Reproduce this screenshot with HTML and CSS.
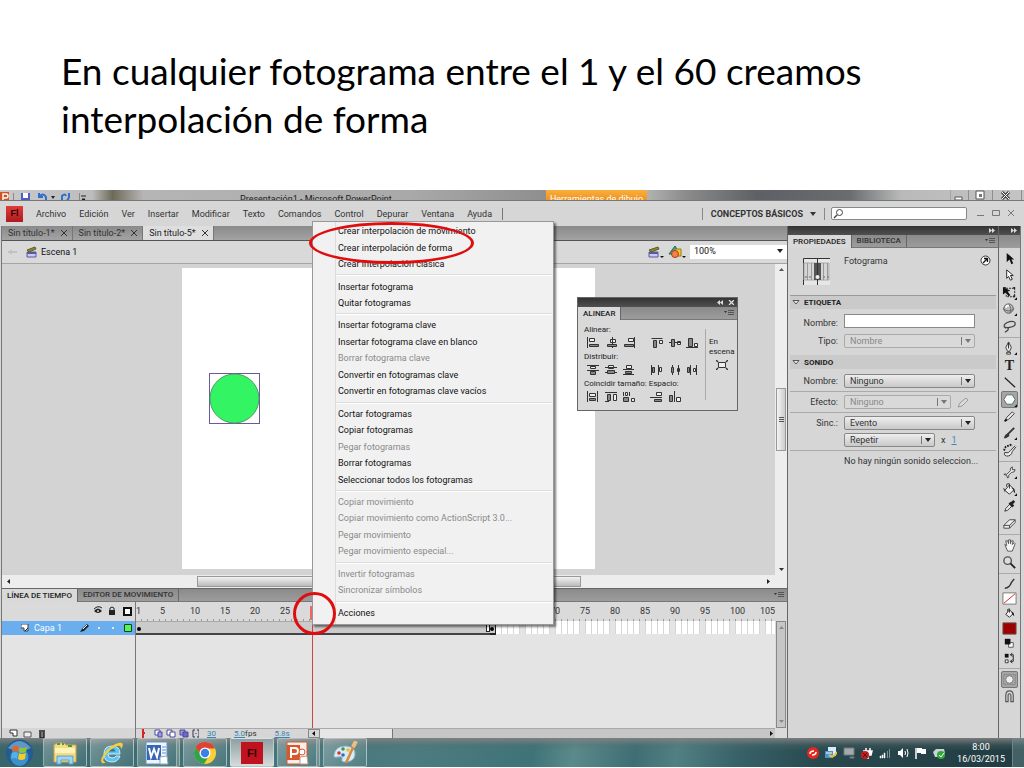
FILE: index.html
```html
<!DOCTYPE html>
<html lang="es">
<head>
    <meta charset="utf-8">
    <title>Interpolación de forma</title>
    <link rel="stylesheet" href="styles.css">
</head>
<body>
    <h1 class="slide-title">En cualquier fotograma entre el 1 y el 60 creamos<br>interpolación de forma</h1>

    <div class="desktop">
        <div class="ppt-bar">
            <div class="ppt-quick">
                <svg width="90" height="11" viewBox="0 0 90 11">
                    <path d="M0 2h9v9H0z" fill="#d35226"/><path d="M3 10V4h3a2 2 0 0 1 0 4H3" fill="none" stroke="#fff" stroke-width="1.4"/>
                    <path d="M13.500 3v8M79.500 3v8" stroke="#888"/>
                    <path d="M21 3h9v8h-9z" fill="#4a5fc4"/><path d="M23 3h5v5h-5z" fill="#fff"/>
                    <path d="M39 3v4h4M39 7q4-5 7 0v4" fill="none" stroke="#2f6fd0" stroke-width="2"/>
                    <path d="M51 6h4l-2 3z" fill="#222"/>
                    <path d="M62 11V6q3-3 4 0M69 3v4q-1 4-3 4" fill="none" stroke="#2f6fd0" stroke-width="2"/>
                    <path d="M81 6h5M82 9h3l-1.500 2z" stroke="#222"/>
                </svg>
            </div>
            <div class="ppt-title">Presentación1 - Microsoft PowerPoint</div>
            <div class="ppt-tab">Herramientas de dibujo</div>
            <svg class="ppt-controls" width="74" height="11" viewBox="0 0 74 11">
                <path d="M0 0v11M18.500 0v11M42.500 0v11M71.500 0v11" stroke="#8e8e8e"/>
                <path d="M5 7h7v3H5zM26 1h8v8h-8z" fill="#fff" stroke="#555"/><path d="M29 4h3v3h-3z" fill="#777"/>
                <path d="M52 2l7 7M59 2l-7 7" stroke="#444" stroke-width="3"/><path d="M52 2l7 7M59 2l-7 7" stroke="#fff"/>
            </svg>
        </div>

        <div class="menu-bar">
            <span class="fl-logo">Fl</span>
            <nav class="menus">
                <a href="#">Archivo</a><a href="#">Edición</a><a href="#">Ver</a><a href="#">Insertar</a><a href="#">Modificar</a><a href="#">Texto</a><a href="#">Comandos</a><a href="#">Control</a><a href="#">Depurar</a><a href="#">Ventana</a><a href="#">Ayuda</a>
            </nav>
            <div class="workspace">
                <button class="workspace-button">CONCEPTOS BÁSICOS <svg width="6" height="4"><path d="M0 0h6L3 4z" fill="#333"/></svg></button>
                <label class="search">
                    <svg width="12" height="11" viewBox="0 0 12 11"><circle cx="7.500" cy="4.500" r="3" fill="none" stroke="#444"/><path d="M5 7L2 10" stroke="#444" stroke-width="1.400"/></svg>
                    <input type="text" aria-label="Buscar">
                </label>
                <svg class="window-controls" width="38" height="9" viewBox="0 0 38 9">
                    <path d="M0 6.500h7M15.500 1.500h7v5h-7zM31 1l6 6M37 1l-6 6" fill="none" stroke="#777"/>
                </svg>
            </div>
        </div>

        <div class="workarea">
            <main class="document">
                <div class="doc-tabs">
                    <button class="doc-tab">Sin título-1* <svg width="6" height="6"><path d="M0 0l6 6M6 0L0 6" stroke="#333"/></svg></button>
                    <button class="doc-tab">Sin título-2* <svg width="6" height="6"><path d="M0 0l6 6M6 0L0 6" stroke="#333"/></svg></button>
                    <button class="doc-tab active">Sin título-5* <svg width="6" height="6"><path d="M0 0l6 6M6 0L0 6" stroke="#333"/></svg></button>
                </div>
                <div class="scene-bar">
                    <svg width="10" height="8" viewBox="0 0 10 8"><path d="M0 4h9M3 2v4M1 3v2" stroke="#c2c2c2" stroke-width="2"/></svg>
                    <svg class="clapper" width="11" height="12" viewBox="0 0 11 12"><path d="M1 6h9v5H1z" fill="#c7c9ff" stroke="#5a5a9a"/><path d="M1 7h9" stroke="#5a5a9a" stroke-width="2"/><path d="M1 4l8-3 1 2-7 3z" fill="#8a8a32" stroke="#5e5e24"/></svg>
                    <span>Escena 1</span>
                    <div class="scene-tools">
                        <svg width="16" height="14" viewBox="0 0 16 14"><path d="M1 7h9v5H1z" fill="#c7c9ff" stroke="#5a5a9a"/><path d="M1 8h9" stroke="#5a5a9a" stroke-width="2"/><path d="M1 5l9-3 1 2-8 3z" fill="#8a8a32" stroke="#5e5e24"/><path d="M12 11h4l-2 2z" fill="#111"/></svg>
                        <svg width="18" height="14" viewBox="0 0 18 14"><path d="M7 1l5 8H1z" fill="#39a58a" stroke="#1e6a5a"/><path d="M7 4h6v7H7z" fill="#f5c93a" stroke="#9a7a10"/><circle cx="7" cy="9" r="3.500" fill="#f4804a" stroke="#b23c12"/><path d="M14 11h4l-2 2z" fill="#111"/></svg>
                        <span class="zoom"><select aria-label="Zoom"><option>100%</option></select></span>
                    </div>
                </div>
                <div class="stage-row">
                    <div class="stage">
                        <div class="canvas">
                            <svg class="shape" width="51" height="51" viewBox="0 0 51 51"><rect x=".5" y=".5" width="50" height="50" fill="#fff" stroke="#6a5a9c"/><circle cx="25.500" cy="25.500" r="24.500" fill="#33f564" stroke="#4d9c62"/></svg>
                        </div>
                    </div>
                    <div class="scroll-v">
                        <svg width="5" height="3"><path d="M0 3h5L2.500 0z" fill="#555"/></svg>
                        <div class="thumb-v"><i></i><i></i><i></i></div>
                        <svg width="5" height="3"><path d="M0 0h5L2.500 3z" fill="#333"/></svg>
                    </div>
                </div>
                <div class="scroll-h">
                    <svg width="3" height="5"><path d="M3 0v5L0 2.500z" fill="#222"/></svg>
                    <div class="thumb-h"></div>
                    <svg width="3" height="5"><path d="M0 0v5l3-2.500z" fill="#222"/></svg>
                </div>

                <section class="timeline">
                    <div class="panel-tabs">
                        <button class="panel-tab active">LÍNEA DE TIEMPO</button>
                        <button class="panel-tab">EDITOR DE MOVIMIENTO</button>
                        <svg class="panel-menu" width="10" height="6" viewBox="0 0 10 6"><path d="M0 1h3L1.500 3z" fill="#333"/><path d="M4 .5h6M4 2.500h6M4 4.500h6" stroke="#555"/></svg>
                    </div>
                    <div class="timeline-body">
                        <div class="layers">
                            <div class="layers-head">
                                <svg width="38" height="10" viewBox="0 0 38 10"><path d="M0 5q4-5 8 0-4 4-8 0z" fill="#222"/><circle cx="4" cy="5" r="1" fill="#ccc"/><path d="M0 3q4-4 8-1" fill="none" stroke="#222"/><path d="M15 4h6v5h-6z" fill="#222"/><path d="M16 5V2q2-2 4 0v3" fill="none" stroke="#222"/><path d="M30 2h7v7h-7z" fill="#fff" stroke="#111" stroke-width="2"/></svg>
                            </div>
                            <div class="layer">
                                <svg width="8" height="8" viewBox="0 0 8 8"><path d="M0 0h7v7H3V4H0z" fill="#fff" stroke="#444"/><path d="M4 7l3-3" stroke="#222"/></svg>
                                <span>Capa 1</span>
                                <svg width="54" height="10" viewBox="0 0 54 10"><path d="M1 9l2-3 5-5 2 2-5 5z" fill="#222"/><path d="M4 6l4-4" stroke="#eee"/><circle cx="20" cy="5" r="1" fill="#fff"/><circle cx="34" cy="5" r="1" fill="#fff"/><path d="M45.500 1.500h7v7h-7z" fill="#4df95a" stroke="#14401a"/></svg>
                            </div>
                            <div class="layers-foot">
                                <svg width="38" height="9" viewBox="0 0 38 9"><path d="M1 1h7v6H4V4H1z" fill="#fff" stroke="#333"/><path d="M15 3h7v5h-7z" fill="#eee" stroke="#555"/><path d="M30 2h6M31 3v6h4V3" fill="#777" stroke="#222" stroke-width="1.400"/></svg>
                            </div>
                        </div>
                        <div class="frames">
                            <div class="ruler">
                                <span class="first">1</span><span>5</span><span>10</span><span>15</span><span>20</span><span>25</span><span></span><span></span><span></span><span></span><span></span><span></span><span></span><span></span><span>70</span><span>75</span><span>80</span><span>85</span><span>90</span><span>95</span><span>100</span><span class="last">105</span>
                            </div>
                            <div class="frame-row">
                                <div class="tween"><i class="key"></i><i class="end"></i></div>
                                <div class="key-cell"><i class="key"></i></div>
                                <div class="empty"></div>
                            </div>
                            <div class="frames-foot">
                                <svg width="60" height="9" viewBox="0 0 60 9"><path d="M4 0v9M3 4h3" stroke="#d22" stroke-width="2"/><g fill="#fff" stroke="#4b48a0"><path d="M16 1h5v5h-5z"/><path d="M19 3h4v5h-4z" fill="#9c9be0"/><path d="M28 1h5v5h-5z"/><path d="M31 3h5v5h-5z"/><path d="M41 1h5v5h-5z" fill="#9c9be0"/><path d="M44 3h5v5h-5z" fill="#6f6cc0"/></g><path d="M56 1h-2v7h2M58 1h2v7h-2M57 4v1" fill="none" stroke="#335"/></svg>
                                <span class="value">30</span><span><b class="value">5.0</b>fps</span><span class="value">5.8s</span>
                                <div class="foot-scroll">
                                    <span class="foot-arrow"><svg width="3" height="5"><path d="M3 0v5L0 2.500z" fill="#111"/></svg></span>
                                    <span class="foot-thumb"></span>
                                    <span class="foot-track"><svg width="3" height="5"><path d="M0 0v5l3-2.500z" fill="#111"/></svg></span>
                                </div>
                            </div>
                            <div class="playhead"></div>
                        </div>
                        <div class="timeline-scroll">
                            <div class="timeline-track">
                                <svg width="5" height="3"><path d="M0 3h5L2.500 0z" fill="#888"/></svg>
                                <svg width="5" height="3"><path d="M0 0h5L2.500 3z" fill="#888"/></svg>
                            </div>
                        </div>
                    </div>
                </section>
            </main>

            <aside class="properties">
                <div class="dock-strip"><svg width="6" height="5"><path d="M0 0l3 2.500L0 5zM3 0l3 2.500L3 5z" fill="#ddd"/></svg></div>
                <div class="panel-tabs">
                    <button class="panel-tab active">PROPIEDADES</button>
                    <button class="panel-tab">BIBLIOTECA</button>
                    <svg class="panel-menu" width="10" height="6" viewBox="0 0 10 6"><path d="M0 1h3L1.500 3z" fill="#333"/><path d="M4 .5h6M4 2.500h6M4 4.500h6" stroke="#555"/></svg>
                </div>
                <div class="prop-head">
                    <svg width="27" height="27" viewBox="0 0 27 27"><path d="M0 0h27v27H0z" fill="#e6e6e6"/><path d="M.5 27V.5H27" fill="none" stroke="#333"/><path d="M1 5h25v17H1z" fill="#d5d5d5" stroke="#aaa"/><path d="M4.500 5v17M8.500 5v17M20.500 5v17M24.500 5v17" stroke="#999"/><path d="M11 5h7v17h-7z" fill="#555"/><path d="M14.500 1v26" stroke="#333"/><circle cx="14.500" cy="19" r="2" fill="#eee"/><g fill="#888"><circle cx="3" cy="19" r="1"/><circle cx="7" cy="19" r="1"/><circle cx="21" cy="19" r="1"/><circle cx="25" cy="19" r="1"/></g></svg>
                    <span>Fotograma</span>
                    <svg class="help" width="11" height="11" viewBox="0 0 11 11"><circle cx="5.500" cy="5.500" r="4.500" fill="#fff" stroke="#333"/><path d="M3 8l4-4M4 3.500h3.500V7" fill="none" stroke="#111" stroke-width="1.300"/></svg>
                </div>
                <h2 class="group-title"><svg width="8" height="5"><path d="M1 .5h6L4 4z" fill="#eee" stroke="#555"/></svg>ETIQUETA</h2>
                <div class="field">
                    <label for="etiqueta">Nombre:</label>
                    <input class="wide" type="text" id="etiqueta">
                </div>
                <div class="field">
                    <label for="tipo">Tipo:</label>
                    <span class="select wide disabled"><select id="tipo" disabled><option>Nombre</option></select></span>
                </div>
                <h2 class="group-title second"><svg width="8" height="5"><path d="M1 .5h6L4 4z" fill="#eee" stroke="#555"/></svg>SONIDO</h2>
                <div class="field">
                    <label for="sonido">Nombre:</label>
                    <span class="select wide"><select id="sonido"><option>Ninguno</option></select></span>
                </div>
                <div class="field ruled">
                    <label for="efecto">Efecto:</label>
                    <span class="select medium disabled"><select id="efecto" disabled><option>Ninguno</option></select></span>
                    <svg width="12" height="11" viewBox="0 0 12 11"><path d="M1 10l2-4 6-5 2 2-6 6z" fill="#ddd" stroke="#999"/></svg>
                </div>
                <div class="field ruled">
                    <label for="sinc">Sinc.:</label>
                    <span class="select wide"><select id="sinc"><option>Evento</option></select></span>
                </div>
                <div class="field">
                    <span></span>
                    <span class="select short"><select aria-label="Repetición"><option>Repetir</option></select></span>
                    <span>x</span><a class="value" href="#">1</a>
                </div>
                <p class="sound-note">No hay ningún sonido seleccion...</p>
            </aside>

            <aside class="tools">
                <div class="dock-strip"><svg width="6" height="5"><path d="M0 0l3 2.500L0 5zM3 0l3 2.500L3 5z" fill="#ddd"/></svg></div>
                <div class="tools-head"></div>
                <div class="tool-group">
                    <button aria-label="Selección"><svg viewBox="0 0 16 16"><path d="M5 2v10l3-3 2 5 2-1-2-4h3z" fill="#111"/></svg></button>
                    <button aria-label="Subselección"><svg viewBox="0 0 16 16"><path d="M5 2v9l2-2 2 4 2-1-2-4h3z" fill="#fff" stroke="#222"/></svg></button>
                    <button aria-label="Transformación"><svg viewBox="0 0 16 16"><path d="M4.500 3.500h9v9h-9z" fill="none" stroke="#222" stroke-dasharray="2 1"/><path d="M1 2v8l3-2 3 4 2-1-3-4 3-1z" fill="#111"/><path d="M2 2h2v2H2zM12 2h2v2h-2zM12 11h2v2h-2z" fill="#222"/><path d="M13 16h3v-3z" fill="#111"/></svg></button>
                    <button aria-label="Rotación 3D"><svg viewBox="0 0 16 16"><circle cx="7" cy="7" r="5" fill="#bbb" stroke="#555"/><path d="M4 6q1-3 4-2" stroke="#fff" stroke-width="2" fill="none"/><path d="M1 7q6 5 12 0M7 2q4 5 1 10" fill="none" stroke="#666"/><path d="M13 15h3v-3z" fill="#111"/></svg></button>
                    <button aria-label="Lazo"><svg viewBox="0 0 16 16"><path d="M4 10q-4-3 1-6 7-3 9 0 1 4-6 5-5 1-5-1M5 9q3 1 1 3t-3 2" fill="none" stroke="#444" stroke-width="1.300"/></svg></button>
                </div>
                <div class="tool-group">
                    <button aria-label="Pluma"><svg viewBox="0 0 16 16"><path d="M7 1l3 6-2 4H6L4 7zM5 12h4v2H5z" fill="#eee" stroke="#333"/><path d="M7 2v6" stroke="#222"/><path d="M13 15h3v-3z" fill="#111"/></svg></button>
                    <button class="type-tool" aria-label="Texto">T</button>
                    <button aria-label="Línea"><svg viewBox="0 0 16 16"><path d="M3 3l11 10" stroke="#222" stroke-width="1.300"/></svg></button>
                    <button class="selected" aria-label="Polígono"><svg viewBox="0 0 16 16"><path d="M5 3h6l3 5-3 5H5L2 8z" fill="#f4ffff" stroke="#666"/><path d="M13 16h3v-3z" fill="#111"/></svg></button>
                    <button aria-label="Lápiz"><svg viewBox="0 0 16 16"><path d="M3 13l2-4 6-6 2 2-6 6z" fill="#eee" stroke="#333"/><path d="M3 13l2-2" stroke="#111" stroke-width="2"/></svg></button>
                    <button aria-label="Pincel"><svg viewBox="0 0 16 16"><path d="M13 2L6 9" stroke="#333" stroke-width="2"/><path d="M2 13q1-5 5-5l1 2q-2 3-6 3z" fill="#333"/><path d="M13 15h3v-3z" fill="#111"/></svg></button>
                    <button aria-label="Deco"><svg viewBox="0 0 16 16"><path d="M14 3L9 8q-2 4-6 2-2 3 2 4 5 0 6-5l4-5" fill="#eee" stroke="#333"/><path d="M2 8l2-4 5-2 2 1" fill="none" stroke="#222" stroke-width="2" stroke-dasharray="2 1"/></svg></button>
                </div>
                <div class="tool-group">
                    <button aria-label="Hueso"><svg viewBox="0 0 16 16"><path d="M2 10q2-1 3 0l4-4q-1-3 2-4v3h3q0 3-4 3l-3 3q1 2-1 3l-1-3z" fill="#eee" stroke="#444"/><path d="M13 15h3v-3z" fill="#111"/></svg></button>
                    <button aria-label="Cubo de pintura"><svg viewBox="0 0 16 16"><path d="M3 9l5-6 5 5-5 5z" fill="#eee" stroke="#333"/><path d="M8 7V2q-4-1-3 3" fill="none" stroke="#333"/><path d="M10 6q4 0 4 6-2-1-2-4z" fill="#222"/><path d="M1 6l3 2-1 3z" fill="#444"/><path d="M13 15h3v-3z" fill="#111"/></svg></button>
                    <button aria-label="Cuentagotas"><svg viewBox="0 0 16 16"><path d="M3 13l1-3 5-5 2 2-5 5z" fill="#eee" stroke="#333"/><path d="M8 4l4 4M10 5l3-3" stroke="#222" stroke-width="3"/></svg></button>
                    <button aria-label="Borrador"><svg viewBox="0 0 16 16"><path d="M2 10l6-6h6l-6 6zM2 10v3h6v-3M8 13l6-6V4" fill="#eee" stroke="#444"/></svg></button>
                </div>
                <div class="tool-group">
                    <button aria-label="Mano"><svg viewBox="0 0 16 16"><path d="M3 7l2 1-1-5 2 0 1 3V2h2v4l1-3 2 0-1 4 2-2 1 1-3 8H6z" fill="#f4f4f4" stroke="#555"/></svg></button>
                    <button aria-label="Zoom"><svg viewBox="0 0 16 16"><circle cx="6" cy="6" r="4" fill="#ddd" stroke="#555" stroke-width="1.500"/><path d="M9 9l5 5" stroke="#222" stroke-width="2"/></svg></button>
                </div>
                <div class="tool-group small">
                    <button aria-label="Color de trazo"><svg viewBox="0 0 16 16"><path d="M3 13q5 0 7-6l3-4" fill="none" stroke="#333" stroke-width="1.500"/></svg></button>
                    <button aria-label="Sin trazo"><svg viewBox="0 0 16 14"><path d="M1 1h14v12H1z" fill="#fff" stroke="#777"/><path d="M2 12L14 2" stroke="#d22"/></svg></button>
                    <button aria-label="Color de relleno"><svg viewBox="0 0 16 16"><path d="M4 9l4-5 4 4-4 4z" fill="#eee" stroke="#333"/><path d="M8 7V3q-3 0-2 3" fill="none" stroke="#333"/><path d="M10 6q3 0 3 5l-2-2z" fill="#222"/></svg></button>
                    <button aria-label="Relleno rojo"><svg viewBox="0 0 16 14"><path d="M1 1h14v12H1z" fill="#9c0000" stroke="#6a5050"/></svg></button>
                    <button aria-label="Blanco y negro"><svg viewBox="0 0 16 16"><path d="M7 7h5v5H7z" fill="#fff" stroke="#555"/><path d="M3 3h6v6H3z" fill="#111"/></svg></button>
                    <button aria-label="Intercambiar colores"><svg viewBox="0 0 16 16"><path d="M3 3h4v4H3z" fill="#111"/><path d="M3.500 9.500h3v3h-3z" fill="#fff" stroke="#333"/><path d="M9 4h3v7H9M11 2L9 4l2 2M11 9l-2 2 2 2" fill="none" stroke="#222"/></svg></button>
                </div>
                <div class="tool-group">
                    <button class="selected" aria-label="Dibujo de objeto"><svg viewBox="0 0 16 16"><path d="M2 3h12v10H2z" fill="#aaa" stroke="#666" stroke-dasharray="1 1"/><circle cx="8" cy="8" r="4" fill="#eee" stroke="#777"/></svg></button>
                    <button aria-label="Ajustar a objetos"><svg viewBox="0 0 16 16"><path d="M4 14V7q0-5 4-5t4 5v7M6.500 14V7q0-2 1.500-2t1.500 2v7M4 13.500h2.500M9.500 13.500H12" fill="none" stroke="#555" stroke-width="1.200"/></svg></button>
                </div>
            </aside>
        </div>

        <footer class="taskbar">
            <button class="start" aria-label="Inicio"><svg width="29" height="28" viewBox="0 0 29 28"><circle cx="14.500" cy="14" r="13.500" fill="#225c93"/><circle cx="14.500" cy="18" r="9" fill="#3b91c8"/><path d="M3 9q11-14 23 0-12 6-23 0z" fill="#7fb0d6" opacity=".7"/><path d="M8 8q3-2 6 0l-1 5q-3-2-6 0z" fill="#e8622c"/><path d="M15 8q3 2 7 0l-1 5q-4 2-7 0z" fill="#8cc63c"/><path d="M7 14q3-2 6 0l-1 6q-3-2-6 0z" fill="#4fb2e8"/><path d="M14 14q3 2 7 0l-1 6q-4 2-7 0z" fill="#fcc92c"/></svg></button>
            <button class="task" aria-label="Explorador"><svg width="24" height="24" viewBox="0 0 24 24"><path d="M1 4l3-2h7l2 2h10v17H1z" fill="#f3dc82" stroke="#c9a94a"/><path d="M2 7h20v5H2z" fill="#fff3b8"/><path d="M4 3h3M9 3h2M15 5h4" stroke="#4a9a4a" stroke-width="2"/><path d="M4 23v-8h16v8h-4v-4H8v4z" fill="#9fd5f1" stroke="#5aa0cc"/></svg></button>
            <button class="task" aria-label="Internet Explorer"><svg width="26" height="24" viewBox="0 0 26 24"><path d="M21 13H9q0 4 4 4 3 0 4-2h4q-2 6-8 6-8 0-8-8t8-8q8 0 8 8z" fill="#5ac4f4" stroke="#c8ecff"/><path d="M9.500 10.500h7q-1-3-3.500-3-3 0-3.500 3z" fill="#41708c"/><path d="M3 22q-3-4 5-13Q18 0 23 2q2 2-1 6 0-4-4-3Q11 8 6 15q-4 6 1 6-3 2-4 1z" fill="#f6cf3c"/></svg></button>
            <button class="task stacked" aria-label="Word"><svg width="24" height="24" viewBox="0 0 24 24"><path d="M1 1h21v22H1z" fill="#eef4fb" stroke="#6b8fc2"/><path d="M2 4h14v15H2z" fill="#3565b5"/><path d="M4 7l2 9 3-8 3 8 2-9" fill="none" stroke="#fff" stroke-width="2"/><path d="M17 6h4M17 9h4M17 12h4" stroke="#6a91cc"/><path d="M15 16l7-1 1 8h-8z" fill="#fff" stroke="#8ab"/></svg></button>
            <button class="task" aria-label="Chrome"><svg width="24" height="24" viewBox="0 0 24 24"><circle cx="12" cy="12" r="11" fill="#f9cf3a"/><path d="M2.500 6.500A11 11 0 0 1 22 7.500H12L8 14z" fill="#dd4335"/><path d="M2.500 6.500A11 11 0 0 0 11 23l5-8-8-1z" fill="#2fa351"/><circle cx="12" cy="12" r="5.500" fill="#fff"/><circle cx="12" cy="12" r="4.200" fill="#3f7fe8"/></svg></button>
            <button class="task current"><span class="task-fl">Fl</span></button>
            <button class="task stacked" aria-label="PowerPoint"><svg width="24" height="24" viewBox="0 0 24 24"><path d="M2 1h20v22H2z" fill="#fbeee8" stroke="#d9582b"/><path d="M2 4h13v15H2z" fill="#d9582b"/><path d="M6 17V7h4a3 3 0 0 1 0 6H6" fill="none" stroke="#fff" stroke-width="2"/><circle cx="17" cy="11" r="3" fill="#fff" stroke="#d9582b"/><path d="M15 16l7-1 1 8h-8z" fill="#fff" stroke="#b98"/></svg></button>
            <button class="task" aria-label="Paint"><svg width="26" height="24" viewBox="0 0 26 24"><path d="M2 14Q3 5 14 5q10 1 9 9-1 7-10 7-4 0-3-3t-4-2-4-2z" fill="#d8ebf6" stroke="#8ab4cc"/><circle cx="7" cy="12" r="1.800" fill="#d33"/><circle cx="11" cy="8" r="1.800" fill="#3a9a4a"/><circle cx="16" cy="9" r="1.800" fill="#f3b92c"/><circle cx="11" cy="14" r="1.800" fill="#2f6fc0"/><path d="M23 2L14 22" stroke="#d9893a" stroke-width="2.500"/><path d="M24 0l-3 6" stroke="#e9c083" stroke-width="4"/></svg></button>
            <div class="tray">
                <svg width="12" height="12" viewBox="0 0 12 12"><circle cx="6" cy="6" r="6" fill="#e3281f"/><path d="M3 7q0-3 4-3M9 5q0 3-4 3" fill="none" stroke="#fff" stroke-width="1.500"/></svg>
                <svg width="12" height="12" viewBox="0 0 12 12"><path d="M3 0h8v9H3z" fill="#dceaf5"/><path d="M0 4h8v7H0z" fill="#4a94d0"/><path d="M1 6h6" stroke="#fff"/><path d="M4 8q4 4 8-3" fill="none" stroke="#eac23a" stroke-width="2"/></svg>
                <svg width="12" height="12" viewBox="0 0 12 12"><path d="M1 1h10v7H1zM7 10h4v1H7z" fill="#a4a9ac" stroke="#72787c"/></svg>
                <svg width="12" height="12" viewBox="0 0 12 12"><path d="M5 1v3M9 1v3M3 4h8l-1 4H5zM7 8v4" fill="#fff" stroke="#fff" stroke-width="1.500"/><circle cx="4" cy="8" r="4" fill="#c81c1c"/><path d="M2 6l4 4M6 6l-4 4" stroke="#511"/></svg>
                <svg width="12" height="12" viewBox="0 0 12 12"><path d="M1 9h1v2H1zM3 8h1v3H3zM5 6h1v5H5z" fill="#fff" stroke="#fff" stroke-width=".5"/><path d="M8 4h1v7H8zM10 2h1v9h-1z" fill="#7d9298"/></svg>
                <svg width="12" height="12" viewBox="0 0 12 12"><path d="M1 4h2l3-3v10L3 8H1z" fill="#fff"/><path d="M8 4q1 2 0 4M10 2q2 4 0 8" fill="none" stroke="#fff"/></svg>
                <svg width="12" height="12" viewBox="0 0 12 12"><path d="M1 1v11" stroke="#fff" stroke-width="1.500"/><path d="M2 1h5v1h4v5H6V6H2z" fill="#fff"/></svg>
                <svg width="12" height="12" viewBox="0 0 12 12"><path d="M0 5l3-3h8l1 4-2 4H2z" fill="#c9d2d4"/><circle cx="8" cy="8" r="4" fill="#2faa3a"/><path d="M6 8l2 2 3-4" fill="none" stroke="#fff"/></svg>
                <div class="clock"><time>8:00</time><time>16/03/2015</time></div>
            </div>
            <button class="show-desktop" aria-label="Mostrar escritorio"></button>
        </footer>

        <!-- floating alignment panel -->
        <section class="align-panel">
            <div class="dock-strip"><svg width="17" height="5" viewBox="0 0 17 5"><path d="M3 0v5L0 2.500zM6 0v5L3 2.500z" fill="#ddd"/><path d="M12 0l5 5M17 0l-5 5" stroke="#ddd" stroke-width="1.300"/></svg></div>
            <div class="panel-tabs">
                <button class="panel-tab active">ALINEAR</button>
                <svg class="panel-menu" width="10" height="6" viewBox="0 0 10 6"><path d="M0 1h3L1.500 3z" fill="#333"/><path d="M4 .5h6M4 2.500h6M4 4.500h6" stroke="#555"/></svg>
            </div>
            <div class="align-body">
                <div class="align-left">
                    <span>Alinear:</span>
                    <svg width="112" height="12" viewBox="0 0 112 12" fill="#eee" stroke="#333">
                        <path d="M.5 0v11M2.500 1.500h5v3h-5z"/><path d="M2.500 7.500h9v2h-9z" fill="#888"/>
                        <path d="M25.500 0v11M23.500 2.500h5v3h-5z"/><path d="M20.500 7.500h9v2h-9z" fill="#888"/>
                        <path d="M47.500 0v11M41.500 1.500h5v3h-5z"/><path d="M37.500 7.500h9v2h-9z" fill="#888"/>
                        <path d="M64.500 1.500h11M72.500 3.500h3v3h-3z"/><path d="M66.500 3.500h3v7h-3z" fill="#888"/>
                        <path d="M82 5.500h12M90.500 4.500h3v3h-3z"/><path d="M84.500 2.500h3v7h-3z" fill="#888"/>
                        <path d="M99 10.500h12M107.500 6.500h3v3h-3z"/><path d="M101.500 1.500h4v8h-4z" fill="#888"/>
                    </svg>
                    <span>Distribuir:</span>
                    <svg width="112" height="12" viewBox="0 0 112 12" fill="#eee" stroke="#333">
                        <path d="M0 1.500h12M3.500 2.500h5v2h-5zM0 6.500h12"/><path d="M3.500 7.500h5v3h-5z" fill="#888"/>
                        <path d="M18 3.500h12M21.500 1.500h5v3h-5zM18 8.500h12"/><path d="M20.500 6.500h7v3h-7z" fill="#888"/>
                        <path d="M36 5.500h11M39.500 1.500h5v3h-5zM36 10.500h11"/><path d="M38.500 7.500h6v2h-6z" fill="#888"/>
                        <path d="M64.500 1v10M71.500 1v10M72.500 3.500h2v4h-2z"/><path d="M65.500 3.500h2v5h-2z" fill="#888"/>
                        <path d="M85.500 1v10M91.500 1v10M90.500 4.500h2v3h-2z"/><path d="M84.500 3.500h2v5h-2z" fill="#888"/>
                        <path d="M103.500 1v10M109.500 1v10M106.500 4.500h2v3h-2z"/><path d="M100.500 3.500h2v5h-2z" fill="#888"/>
                    </svg>
                    <span>Coincidir tamaño: Espacio:</span>
                    <svg width="112" height="12" viewBox="0 0 112 12" fill="#eee" stroke="#333">
                        <path d="M.5 0v11M10.500 0v11M2.500 2.500h6v3h-6z"/><path d="M2.500 7.500h6v2h-6z" fill="#888"/>
                        <path d="M18 1.500h12M18 10.500h4M26.500 3.500h3v6h-3z"/><path d="M20.500 3.500h3v6h-3z" fill="#888"/>
                        <path d="M36.500 1v4M42.500 1v4M38.500 1.500h2v3h-2zM44.500 7.500h3v3h-3z"/><path d="M36.500 6.500h5v4h-5z" fill="#888"/>
                        <path d="M63 6.500h12M69.500 1.500h5v3h-5z"/><path d="M67.500 8.500h7v2h-7z" fill="#888"/>
                        <path d="M87.500 0v11M89.500 6.500h4v4h-4z"/><path d="M82.500 4.500h3v6h-3z" fill="#888"/>
                    </svg>
                </div>
                <div class="align-right">
                    <span>En<br>escena</span>
                    <svg width="12" height="10" viewBox="0 0 12 10"><path d="M2.500 2.500h7v5h-7z" fill="#eee" stroke="#333"/><path d="M0 0l2 2M12 0l-2 2M0 10l2-2M12 10l-2-2" stroke="#333" stroke-width="1.400"/></svg>
                </div>
            </div>
        </section>

        <!-- frame context menu -->
        <div class="context-menu">
            <button>Crear interpolación de movimiento</button>
            <button>Crear interpolación de forma</button>
            <button>Crear interpolación clásica</button>
            <hr>
            <button>Insertar fotograma</button>
            <button>Quitar fotogramas</button>
            <hr>
            <button>Insertar fotograma clave</button>
            <button>Insertar fotograma clave en blanco</button>
            <button disabled>Borrar fotograma clave</button>
            <button>Convertir en fotogramas clave</button>
            <button>Convertir en fotogramas clave vacíos</button>
            <hr>
            <button>Cortar fotogramas</button>
            <button>Copiar fotogramas</button>
            <button disabled>Pegar fotogramas</button>
            <button>Borrar fotogramas</button>
            <button>Seleccionar todos los fotogramas</button>
            <hr>
            <button disabled>Copiar movimiento</button>
            <button disabled>Copiar movimiento como ActionScript 3.0...</button>
            <button disabled>Pegar movimiento</button>
            <button disabled>Pegar movimiento especial...</button>
            <hr>
            <button disabled>Invertir fotogramas</button>
            <button disabled>Sincronizar símbolos</button>
            <hr>
            <button>Acciones</button>
        </div>

        <div class="mark mark-shape"></div>
        <div class="mark mark-frame"></div>
    </div>
</body>
</html>
```

FILE: styles.css
```css
*{
    box-sizing: border-box;
}
body{
    margin: 0;
    background: #fff;
    color: #333;
    font-family: Roboto, "Open Sans", sans-serif;
    font-size: 9px;
    line-height: 12px;
}
button, input, select{
    margin: 0;
    padding: 0;
    border: 0;
    background: none;
    color: inherit;
    font: inherit;
}
select{
    appearance: none;
    opacity: 1;
}
svg{
    display: block;
    flex: none;
}
a{
    color: inherit;
    text-decoration: none;
}
.slide-title{
    margin: 0;
    padding: 47px 61px;
    color: #000;
    font: 37px/48px Lato, sans-serif;
}
.desktop{
    position: relative;
    background: #d6d6d6;
    border-bottom: 2px solid #fff;
}
.value{
    color: #3a85b5;
    font-weight: normal;
    text-decoration: underline;
}

/* powerpoint title strip */
.ppt-bar{
    display: flex;
    height: 11px;
    overflow: hidden;
    background: linear-gradient(90deg, #c9c9c9 0, #bdbdbd 9%, #6e6a58 11%, #b5b5b5 14%, #a9a9a9 40%, #8f8f8f 53%, #b4b4b4 63%, #8b8b8b 67%, #5d6064 74%, #6a6d70 83%, #b9b9b9 88%, #c4c4c4 100%);
    border-bottom: 1px solid #777;
    line-height: 18px;
}
.ppt-quick{
    width: 240px;
}
.ppt-title{
    width: 306px;
    color: #222;
}
.ppt-tab{
    width: 101px;
    background: linear-gradient(#f9ae3e, #ef9420);
    color: #fff;
    text-align: center;
}
.ppt-controls{
    margin-left: auto;
}

/* menu bar */
.menu-bar{
    display: flex;
    align-items: center;
    height: 25px;
    padding: 0 9px 0 6px;
}
.fl-logo{
    width: 17px;
    height: 16px;
    background: linear-gradient(#e23b3b, #ac1a20);
    color: #300;
    font: bold 9px/15px "Liberation Sans", sans-serif;
    text-align: center;
}
.menus{
    display: flex;
    gap: 13px;
    padding: 0 10px 0 13px;
    border-right: 1px solid #777;
}
.workspace{
    display: flex;
    align-items: center;
    margin-left: auto;
}
.workspace-button{
    display: flex;
    align-items: center;
    gap: 7px;
    padding: 0 8px;
    border: solid #888;
    border-width: 0 1px;
    font-weight: bold;
}
.search{
    display: flex;
    align-items: center;
    width: 136px;
    height: 13px;
    margin: 0 10px 0 6px;
    background: #fff;
    border: 1px solid #888;
    border-radius: 2px;
}
.search input{
    width: 100%;
}

.workarea{
    display: flex;
    padding: 0 3px 0 1px;
}
.document{
    flex: 1;
    min-width: 0;
    border-left: 1px solid #777;
}

/* document tabs */
.doc-tabs{
    display: flex;
    height: 15px;
    background: linear-gradient(#8a8a8a, #a3a3a3);
    border-bottom: 1px solid #555;
}
.doc-tab{
    display: flex;
    align-items: center;
    gap: 6px;
    padding: 0 5px 0 6px;
    border-right: 1px solid #777;
    color: #333;
}
.doc-tab.active{
    background: #dedede;
    color: #222;
}
.scene-bar{
    display: flex;
    align-items: center;
    height: 23px;
    padding-left: 6px;
    background: #d9d9d9;
    border-bottom: 1px solid #a5a5a5;
    color: #111;
}
.clapper{
    margin: 0 4px 0 8px;
}
.scene-tools{
    display: flex;
    align-items: center;
    gap: 4px;
    margin-left: auto;
}
.zoom{
    position: relative;
    width: 97px;
    height: 14px;
    background: #fff;
}
.zoom select{
    width: 100%;
    padding-left: 4px;
}
.zoom::after, .select::after{
    content: "";
    position: absolute;
    top: 4px;
    right: 4px;
    border: solid transparent;
    border-width: 4px 3px 0;
    border-top-color: #222;
    pointer-events: none;
}

/* stage */
.stage-row{
    display: flex;
}
.stage{
    flex: 1;
    padding: 4px 0 6px;
    background: #d3d3d3;
}
.canvas{
    position: relative;
    width: 413px;
    height: 301px;
    margin: auto;
    background: #fff;
}
.shape{
    position: absolute;
    left: 27px;
    top: 105px;
}
.scroll-v{
    display: flex;
    flex-direction: column;
    align-items: center;
    width: 12px;
    padding: 4px 0;
    background: #ededed;
}
.thumb-v{
    display: flex;
    flex-direction: column;
    align-items: center;
    justify-content: center;
    gap: 1px;
    width: 10px;
    height: 63px;
    margin: 117px 0 auto;
    background: linear-gradient(90deg, #f4f4f4, #ccc);
    border: 1px solid #999;
}
.thumb-v i{
    width: 5px;
    height: 1px;
    background: #555;
}
.scroll-h{
    display: flex;
    align-items: center;
    height: 14px;
    padding: 0 17px 0 5px;
    background: #ededed;
    border-bottom: 1px solid #666;
}
.thumb-h{
    width: 384px;
    height: 11px;
    margin: 0 auto 0 187px;
    background: linear-gradient(#f2f2f2, #bbb);
    border: 1px solid #999;
}

/* panels */
.panel-tabs{
    display: flex;
    height: 13px;
    background: linear-gradient(#8a8a8a, #9c9c9c);
    border-bottom: 1px solid #777;
}
.panel-tab{
    padding: 0 5px;
    border-right: 1px solid #666;
    color: #333;
    font-size: 8px;
    font-weight: 500;
}
.panel-tab.active{
    margin-bottom: -1px;
    background: #d9d9d9;
    color: #222;
}
.panel-menu{
    margin: 3px 3px 0 auto;
}
.dock-strip{
    display: flex;
    align-items: center;
    justify-content: flex-end;
    height: 9px;
    padding-right: 3px;
    background: linear-gradient(#333, #505050);
}

/* timeline */
.timeline-body{
    display: flex;
    height: 136px;
    background: #e4e4e4;
}
.layers{
    display: flex;
    flex-direction: column;
    width: 134px;
    border-right: 1px solid #777;
}
.layers-head, .ruler{
    height: 19px;
    background: #dadada;
}
.layers-head{
    padding: 4px 0 0 92px;
}
.layer{
    display: flex;
    align-items: center;
    height: 14px;
    padding: 0 2px 0 19px;
    background: #6aaeee;
    color: #fff;
}
.layer span{
    margin: 0 auto 0 5px;
}
.layers-foot, .frames-foot{
    height: 10px;
    margin-top: auto;
    overflow: hidden;
    background: #d6d6d6;
}
.layers-foot{
    padding: 1px 0 0 7px;
}
.frames{
    position: relative;
    display: flex;
    flex: 1;
    flex-direction: column;
    min-width: 0;
}
.ruler{
    display: flex;
    overflow: hidden;
    background: repeating-linear-gradient(90deg, transparent 0 5px, #999 5px 6px) 0 17px / auto 2px repeat-x, #dadada;
    line-height: 18px;
}
.ruler span{
    flex: none;
    width: 30px;
}
.ruler .first{
    width: 24px;
}
.ruler .last{
    width: 15px;
}
.frame-row{
    display: flex;
    height: 14px;
}
.tween{
    display: flex;
    align-items: center;
    justify-content: space-between;
    width: 354px;
    background: #cbcbcb;
    border-bottom: 2px solid #444;
    border-top: 1px solid #aaa;
}
.key{
    width: 4px;
    height: 4px;
    margin: 3px 0 0 1px;
    background: #000;
    border-radius: 50%;
}
.end{
    width: 4px;
    height: 8px;
    background: #fff;
    border: 1px solid #222;
}
.key-cell{
    width: 6px;
    padding-top: 3px;
    background: #cbcbcb;
    border: solid #222;
    border-width: 0 1px 2px 0;
}
.key-cell .key{
    display: block;
    margin-left: 0;
}
.empty{
    flex: 1;
    height: 13px;
    background: repeating-linear-gradient(90deg, transparent 0 5px, #d6d6d6 5px 6px), repeating-linear-gradient(90deg, #fff 0 24px, #e4e4e4 24px 30px);
}
.frames-foot{
    display: flex;
    gap: 18px;
    padding-left: 3px;
    font-size: 8px;
    line-height: 10px;
    border-top: 1px solid #aaa;
}
.frames-foot svg + .value{
    margin-left: -10px;
}
.foot-scroll{
    display: flex;
    flex: 1;
}
.foot-arrow{
    width: 12px;
    padding: 1px 3px;
    border: 1px solid #888;
}
.foot-thumb{
    width: 72px;
    background: #e6e6e6;
}
.foot-track{
    flex: 1;
    padding: 2px;
    background: #c6c6c6;
    border-left: 1px solid #777;
}
.foot-track svg{
    margin-left: auto;
}
.playhead{
    position: absolute;
    left: 174px;
    top: 4px;
    bottom: 10px;
    width: 5px;
    background: linear-gradient(90deg, transparent 2px, #c44 2px 3px, transparent 3px);
    border-top: 14px solid #e66;
}
.timeline-scroll{
    width: 12px;
    padding: 19px 1px 10px;
    background: #dadada;
}
.timeline-track{
    display: flex;
    flex-direction: column;
    align-items: center;
    justify-content: space-between;
    height: 100%;
    padding: 4px 0;
    background: #c6c6c6;
    border: 1px solid #888;
}

/* properties */
.properties{
    width: 212px;
    border: solid #666;
    border-width: 0 1px;
}
.tools-head{
    height: 13px;
}
.prop-head{
    display: flex;
    gap: 14px;
    height: 47px;
    padding: 10px 7px 0 15px;
}
.help{
    margin: -3px 0 0 auto;
}
.prop-head span{
    margin-top: -3px;
}
.group-title{
    display: flex;
    align-items: center;
    gap: 4px;
    margin: 0 2px 5px;
    height: 14px;
    padding-left: 2px;
    background: #cacaca;
    border-top: 1px solid #999;
    color: #222;
    font-size: 8px;
    font-weight: bold;
}
.group-title.second{
    margin-top: 4px;
    border-color: #cacaca;
}
.field{
    display: grid;
    grid-template-columns: 48px auto auto 1fr;
    gap: 6px;
    align-items: center;
    margin: 0 2px;
    padding-bottom: 3px;
}
.field label{
    text-align: right;
}
.field > input, .select{
    height: 14px;
    border: 1px solid #888;
}
.field > input{
    margin-bottom: 3px;
    background: #fff;
}
.select{
    position: relative;
    background: linear-gradient(#eee, #c9c9c9);
    border-radius: 2px;
}
.select::before{
    content: "";
    position: absolute;
    top: 2px;
    right: 12px;
    height: 8px;
    border-left: 1px solid #777;
}
.select::after{
    right: 3px;
}
.select select{
    display: block;
    width: 100%;
    padding-left: 5px;
}
.disabled{
    background: #d9d9d9;
    color: #888;
    border-color: #aaa;
}
.disabled::after{
    border-top-color: #777;
}
.wide{
    width: 131px;
}
.medium{
    width: 107px;
}
.short{
    width: 91px;
}
.ruled{
    padding-top: 3px;
    border-top: 1px solid #aaa;
}
.sound-note{
    margin: 0 2px;
    padding: 4px 0 0 54px;
    border-top: 1px solid #aaa;
}

/* tools */
.tools{
    width: 22px;
    border-right: 1px solid #777;
}
.tools-head{
    margin-bottom: 2px;
    background: linear-gradient(#8a8a8a, #9c9c9c);
}
.tool-group{
    display: flex;
    flex-direction: column;
    align-items: center;
    padding-bottom: 2px;
}
.tool-group + .tool-group{
    padding-top: 2px;
    border-top: 1px solid #aaa;
}
.tool-group button{
    display: flex;
    align-items: center;
    justify-content: center;
    width: 17px;
    height: 17px;
}
.tool-group svg{
    width: 15px;
    height: 15px;
}
.tool-group.small button{
    height: 15px;
}
.tool-group .selected{
    background: #a5a5a5;
    border: 1px solid #777;
    border-radius: 2px;
}
.tool-group .type-tool{
    color: #222;
    font: bold 14px/17px "Liberation Serif", serif;
}

/* taskbar */
.taskbar{
    display: flex;
    gap: 3px;
    height: 29px;
    background: linear-gradient(rgba(130, 130, 130, .9), rgba(90, 110, 110, .3) 25%, transparent 45%), linear-gradient(100deg, #37656a 0, #4c7c80 40%, #3f7378 52%, #5a8a8b 56%, #3e6e74 62%, #518083 66%, #376268 72%, #28484e 80%, #213c42 100%);
}
.start{
    width: 40px;
    padding-left: 5px;
}
.task{
    display: flex;
    align-items: center;
    justify-content: center;
    width: 44px;
    background: linear-gradient(135deg, rgba(255, 255, 255, .3), rgba(255, 255, 255, .04));
    border: 1px solid rgba(220, 235, 235, .5);
    border-radius: 2px;
}
.stacked{
    width: 43px;
    border-right: 4px double #9fb2b2;
}
.current{
    background: linear-gradient(#8f9f9f, #d5dcdc);
}
.task-fl{
    width: 22px;
    height: 22px;
    background: #c1121f;
    color: #300;
    font: bold 11px/22px "Liberation Sans", sans-serif;
}
.tray{
    display: flex;
    align-items: center;
    gap: 6px;
    margin-left: auto;
}
.clock{
    display: flex;
    flex-direction: column;
    margin-left: 6px;
    color: #fff;
    text-align: center;
}
.show-desktop{
    width: 12px;
    margin-left: 4px;
    background: rgba(120, 150, 155, .4);
    border-left: 1px solid #6d8589;
}

/* floating panels */
.align-panel{
    position: absolute;
    left: 577px;
    top: 107px;
    width: 161px;
    background: #d9d9d9;
    border: 1px solid #666;
    color: #222;
    font-size: 8px;
}
.align-body{
    display: flex;
    padding: 4px 0 5px 6px;
}
.align-left{
    width: 121px;
    white-space: nowrap;
}
.align-left svg{
    margin: 1px 0 2px 3px;
}
.align-right{
    display: flex;
    flex-direction: column;
    align-items: center;
    gap: 3px;
    margin: 5px 0;
    padding: 8px 0 0 3px;
    border-left: 1px solid #aaa;
    line-height: 10px;
}
.context-menu{
    position: absolute;
    left: 312px;
    top: 31px;
    display: flex;
    flex-direction: column;
    width: 242px;
    height: 404px;
    padding: 1px 1px 3px 0;
    background: linear-gradient(90deg, #f1f1f1 22px, #ddd 22px 23px, #f1f1f1 23px);
    border: 1px solid #999;
    box-shadow: 2px 2px 2px rgba(0, 0, 0, .5);
    color: #111;
}
.context-menu button{
    flex: 1 1 0;
    min-height: 0;
    padding-left: 25px;
    text-align: left;
}
.context-menu button:disabled{
    color: #8a8a8a;
}
.context-menu hr{
    flex: none;
    width: 216px;
    height: 2px;
    margin: 2px 0 2px auto;
    background: #fff;
    border: 0;
    border-top: 1px solid #ddd;
}

/* red highlights */
.mark{
    position: absolute;
    border: 3px solid #df0d0d;
    border-radius: 50%;
    pointer-events: none;
}
.mark-shape{
    left: 309px;
    top: 32px;
    width: 165px;
    height: 42px;
}
.mark-frame{
    left: 293px;
    top: 402px;
    width: 43px;
    height: 43px;
}
```
